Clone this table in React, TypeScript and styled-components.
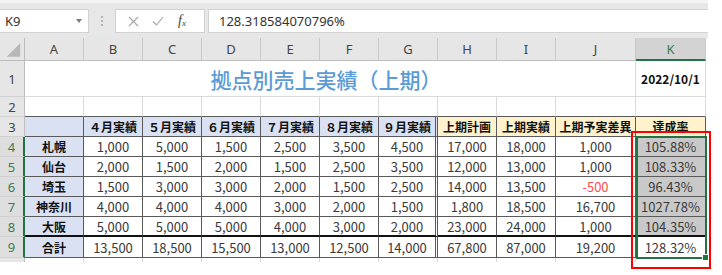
import React from 'react'
import styled, { createGlobalStyle, css } from 'styled-components'

const GlobalStyle = createGlobalStyle`
  html, body {
    margin: 0;
    padding: 0;
    background: #fff;
  }
  body {
    font-family: "Noto Sans CJK JP", "Noto Sans", sans-serif;
  }
`

const GREEN = '#217346'
const GRID = '#dadada'
const LINE = '#5a5a5a'
const BLUE = '#d9e1f2'
const YELLOW = '#fff2cc'

const Page = styled.div`
  position: relative;
  width: 722px;
  height: 275px;
  overflow: hidden;
  background: #fff;
`

const Window = styled.div`
  width: 708px;
  height: 262px;
  overflow: hidden;
  background: #fff;
`

const FormulaBar = styled.div`
  height: 38px;
  box-sizing: border-box;
  border-top: 3px solid #f4f4f4;
  padding-top: 6px;
  background: #e7e7e7;
  display: flex;
  align-items: flex-start;
`

const Field = styled.div`
  height: 24px;
  box-sizing: border-box;
  background: #fff;
  border: 1px solid #d2d2d2;
  display: flex;
  align-items: center;
  font-family: "Noto Sans", sans-serif;
  font-size: 13px;
  color: #333;
`

const NameBox = styled(Field)`
  width: 89px;
  border-left: none;
  padding: 0 6px 0 5px;
  justify-content: space-between;
`

const Dots = styled.div`
  width: 26px;
  height: 24px;
  display: flex;
  flex-direction: column;
  align-items: center;
  justify-content: center;
  gap: 2px;
  span {
    width: 2px;
    height: 2px;
    background: #b4b4b4;
  }
`

const FxBox = styled(Field)`
  width: 90px;
  padding-left: 12px;
  gap: 13px;
`

const FxLabel = styled.span`
  font-family: "Liberation Serif", serif;
  font-style: italic;
  font-size: 14px;
  color: #444;
  margin-left: 1px;
  sub {
    font-size: 9px;
    vertical-align: -1px;
  }
`

const Formula = styled(Field)`
  flex: 1;
  margin-left: 3px;
  padding-left: 10px;
  border-right: none;
`

const Sheet = styled.div`
  display: grid;
  grid-template-columns: 25px repeat(9, 59px) 80px 70px;
  grid-template-rows: 23px 36px repeat(7, 20px) 21px 20px;
`

const Head = styled.div<{ $active?: boolean }>`
  box-sizing: border-box;
  display: flex;
  align-items: center;
  justify-content: center;
  background: ${p => (p.$active ? '#d3d3d3' : '#e6e6e6')};
  color: ${p => (p.$active ? '#3d7a52' : '#444')};
  font-family: "Noto Sans", sans-serif;
  font-size: 13px;
`

const ColHead = styled(Head)`
  border-right: 1px solid #c9c9c9;
  border-bottom: ${p => (p.$active ? `2px solid ${GREEN}` : '1px solid #bdbdbd')};
`

const RowHead = styled(Head)`
  border-bottom: 1px solid #d0d0d0;
  border-right: ${p => (p.$active ? `2px solid ${GREEN}` : '1px solid #bdbdbd')};
  background: ${p => (p.$active ? '#dedede' : '#e6e6e6')};
`

const Corner = styled(Head)`
  border-right: 1px solid #bdbdbd;
  border-bottom: 1px solid #bdbdbd;
`

interface CellProps {
  $bg?: string
  $bold?: boolean
  $color?: string
  $table?: boolean
  $edge?: boolean
  $thick?: boolean
  $double?: boolean
}

const Cell = styled.div<CellProps>`
  box-sizing: border-box;
  display: flex;
  align-items: center;
  justify-content: center;
  overflow: hidden;
  white-space: nowrap;
  background: ${p => p.$bg || '#fff'};
  color: ${p => p.$color || '#3a3a3a'};
  font-size: ${p => (p.$bold ? '12px' : '13px')};
  font-weight: ${p => (p.$bold ? 700 : 400)};
  border-right: 1px solid ${p => (p.$table ? LINE : GRID)};
  border-bottom: 1px solid ${p => (p.$table || p.$edge ? LINE : GRID)};
  ${p =>
    p.$thick &&
    css`
      border-bottom: 2px solid #111;
    `}
  ${p =>
    p.$double &&
    css`
      border-right: 3px double ${LINE};
    `}
`

const Title = styled(Cell)`
  grid-column: span 10;
  font-size: 21px;
  font-weight: 500;
  color: #5b9bd5;
  padding-right: 8px;
`

const DateCell = styled(Cell)`
  color: #111;
`

const Selection = styled.div`
  position: absolute;
  left: 636px;
  top: 136px;
  width: 71px;
  height: 123px;
  box-sizing: border-box;
  border: 2px solid ${GREEN};
`

const FillHandle = styled.div`
  position: absolute;
  left: 703px;
  top: 255px;
  width: 5px;
  height: 5px;
  background: ${GREEN};
  outline: 1px solid #fff;
`

const Callout = styled.div`
  position: absolute;
  left: 631px;
  top: 131px;
  width: 80px;
  height: 138px;
  box-sizing: border-box;
  border: 2px solid #ff0000;
`

const columns = ['A', 'B', 'C', 'D', 'E', 'F', 'G', 'H', 'I', 'J', 'K']
const months = ['４月実績', '５月実績', '６月実績', '７月実績', '８月実績', '９月実績']
const totals = ['上期計画', '上期実績', '上期予実差異', '達成率']

const rows: [string, string[]][] = [
  ['札幌', ['1,000', '5,000', '1,500', '2,500', '3,500', '4,500', '17,000', '18,000', '1,000', '105.88%']],
  ['仙台', ['2,000', '1,500', '2,000', '1,500', '2,500', '3,500', '12,000', '13,000', '1,000', '108.33%']],
  ['埼玉', ['1,500', '3,000', '3,000', '2,000', '1,500', '2,500', '14,000', '13,500', '-500', '96.43%']],
  ['神奈川', ['4,000', '4,000', '4,000', '3,000', '2,000', '1,500', '1,800', '18,500', '16,700', '1027.78%']],
  ['大阪', ['5,000', '5,000', '5,000', '4,000', '3,000', '2,000', '23,000', '24,000', '1,000', '104.35%']],
  ['合計', ['13,500', '18,500', '15,500', '13,000', '12,500', '14,000', '67,800', '87,000', '19,200', '128.32%']],
]

const CrossIcon = () => (
  <svg width="11" height="11" viewBox="0 0 11 11">
    <path d="M1 1 L10 10 M10 1 L1 10" stroke="#a6a6a6" strokeWidth="1.1" fill="none" />
  </svg>
)

const CheckIcon = () => (
  <svg width="12" height="10" viewBox="0 0 12 10">
    <path d="M1 5.5 L4.5 9 L11 1" stroke="#a6a6a6" strokeWidth="1.1" fill="none" />
  </svg>
)

const Caret = () => (
  <svg width="6" height="4" viewBox="0 0 6 4">
    <path d="M0 0 H6 L3 4 Z" fill="#7a7a7a" />
  </svg>
)

const SelectAll = () => (
  <svg width="25" height="23" viewBox="0 0 25 23">
    <path d="M21 5 V19 H7 Z" fill="#b8b8b8" />
  </svg>
)

export default function App() {
  return (
    <Page>
      <GlobalStyle />
      <Window>
        <FormulaBar>
          <NameBox>
            <span>K9</span>
            <Caret />
          </NameBox>
          <Dots>
            <span />
            <span />
            <span />
          </Dots>
          <FxBox>
            <CrossIcon />
            <CheckIcon />
            <FxLabel>
              f<sub>x</sub>
            </FxLabel>
          </FxBox>
          <Formula>128.318584070796%</Formula>
        </FormulaBar>

        <Sheet>
          <Corner>
            <SelectAll />
          </Corner>
          {columns.map(c => (
            <ColHead key={c} $active={c === 'K'}>
              {c}
            </ColHead>
          ))}

          <RowHead>1</RowHead>
          <Title>拠点別売上実績（上期）</Title>
          <DateCell $bold>2022/10/1</DateCell>

          <RowHead>2</RowHead>
          {columns.map(c => (
            <Cell key={c} $edge />
          ))}

          <RowHead>3</RowHead>
          <Cell $table $bg={BLUE} />
          {months.map((m, i) => (
            <Cell key={m} $table $bold $bg={BLUE} $double={i === 5} $color="#111">
              {m}
            </Cell>
          ))}
          {totals.map(t => (
            <Cell key={t} $table $bold $bg={YELLOW} $color="#111">
              {t}
            </Cell>
          ))}

          {rows.map(([name, values], r) => (
            <React.Fragment key={name}>
              <RowHead $active>{r + 4}</RowHead>
              <Cell $table $bold $bg={BLUE} $thick={r === 4} $color="#111">
                {name}
              </Cell>
              {values.map((v, i) => (
                <Cell
                  key={i}
                  $table
                  $thick={r === 4}
                  $double={i === 5}
                  $color={v.startsWith('-') ? '#ff4b4b' : undefined}
                  $bg={i === 9 && r < 5 ? '#c9c9c9' : undefined}
                >
                  {v}
                </Cell>
              ))}
            </React.Fragment>
          ))}

          <RowHead />
          {columns.map(c => (
            <Cell key={c} />
          ))}
        </Sheet>
      </Window>

      <Selection />
      <FillHandle />
      <Callout />
    </Page>
  )
}
